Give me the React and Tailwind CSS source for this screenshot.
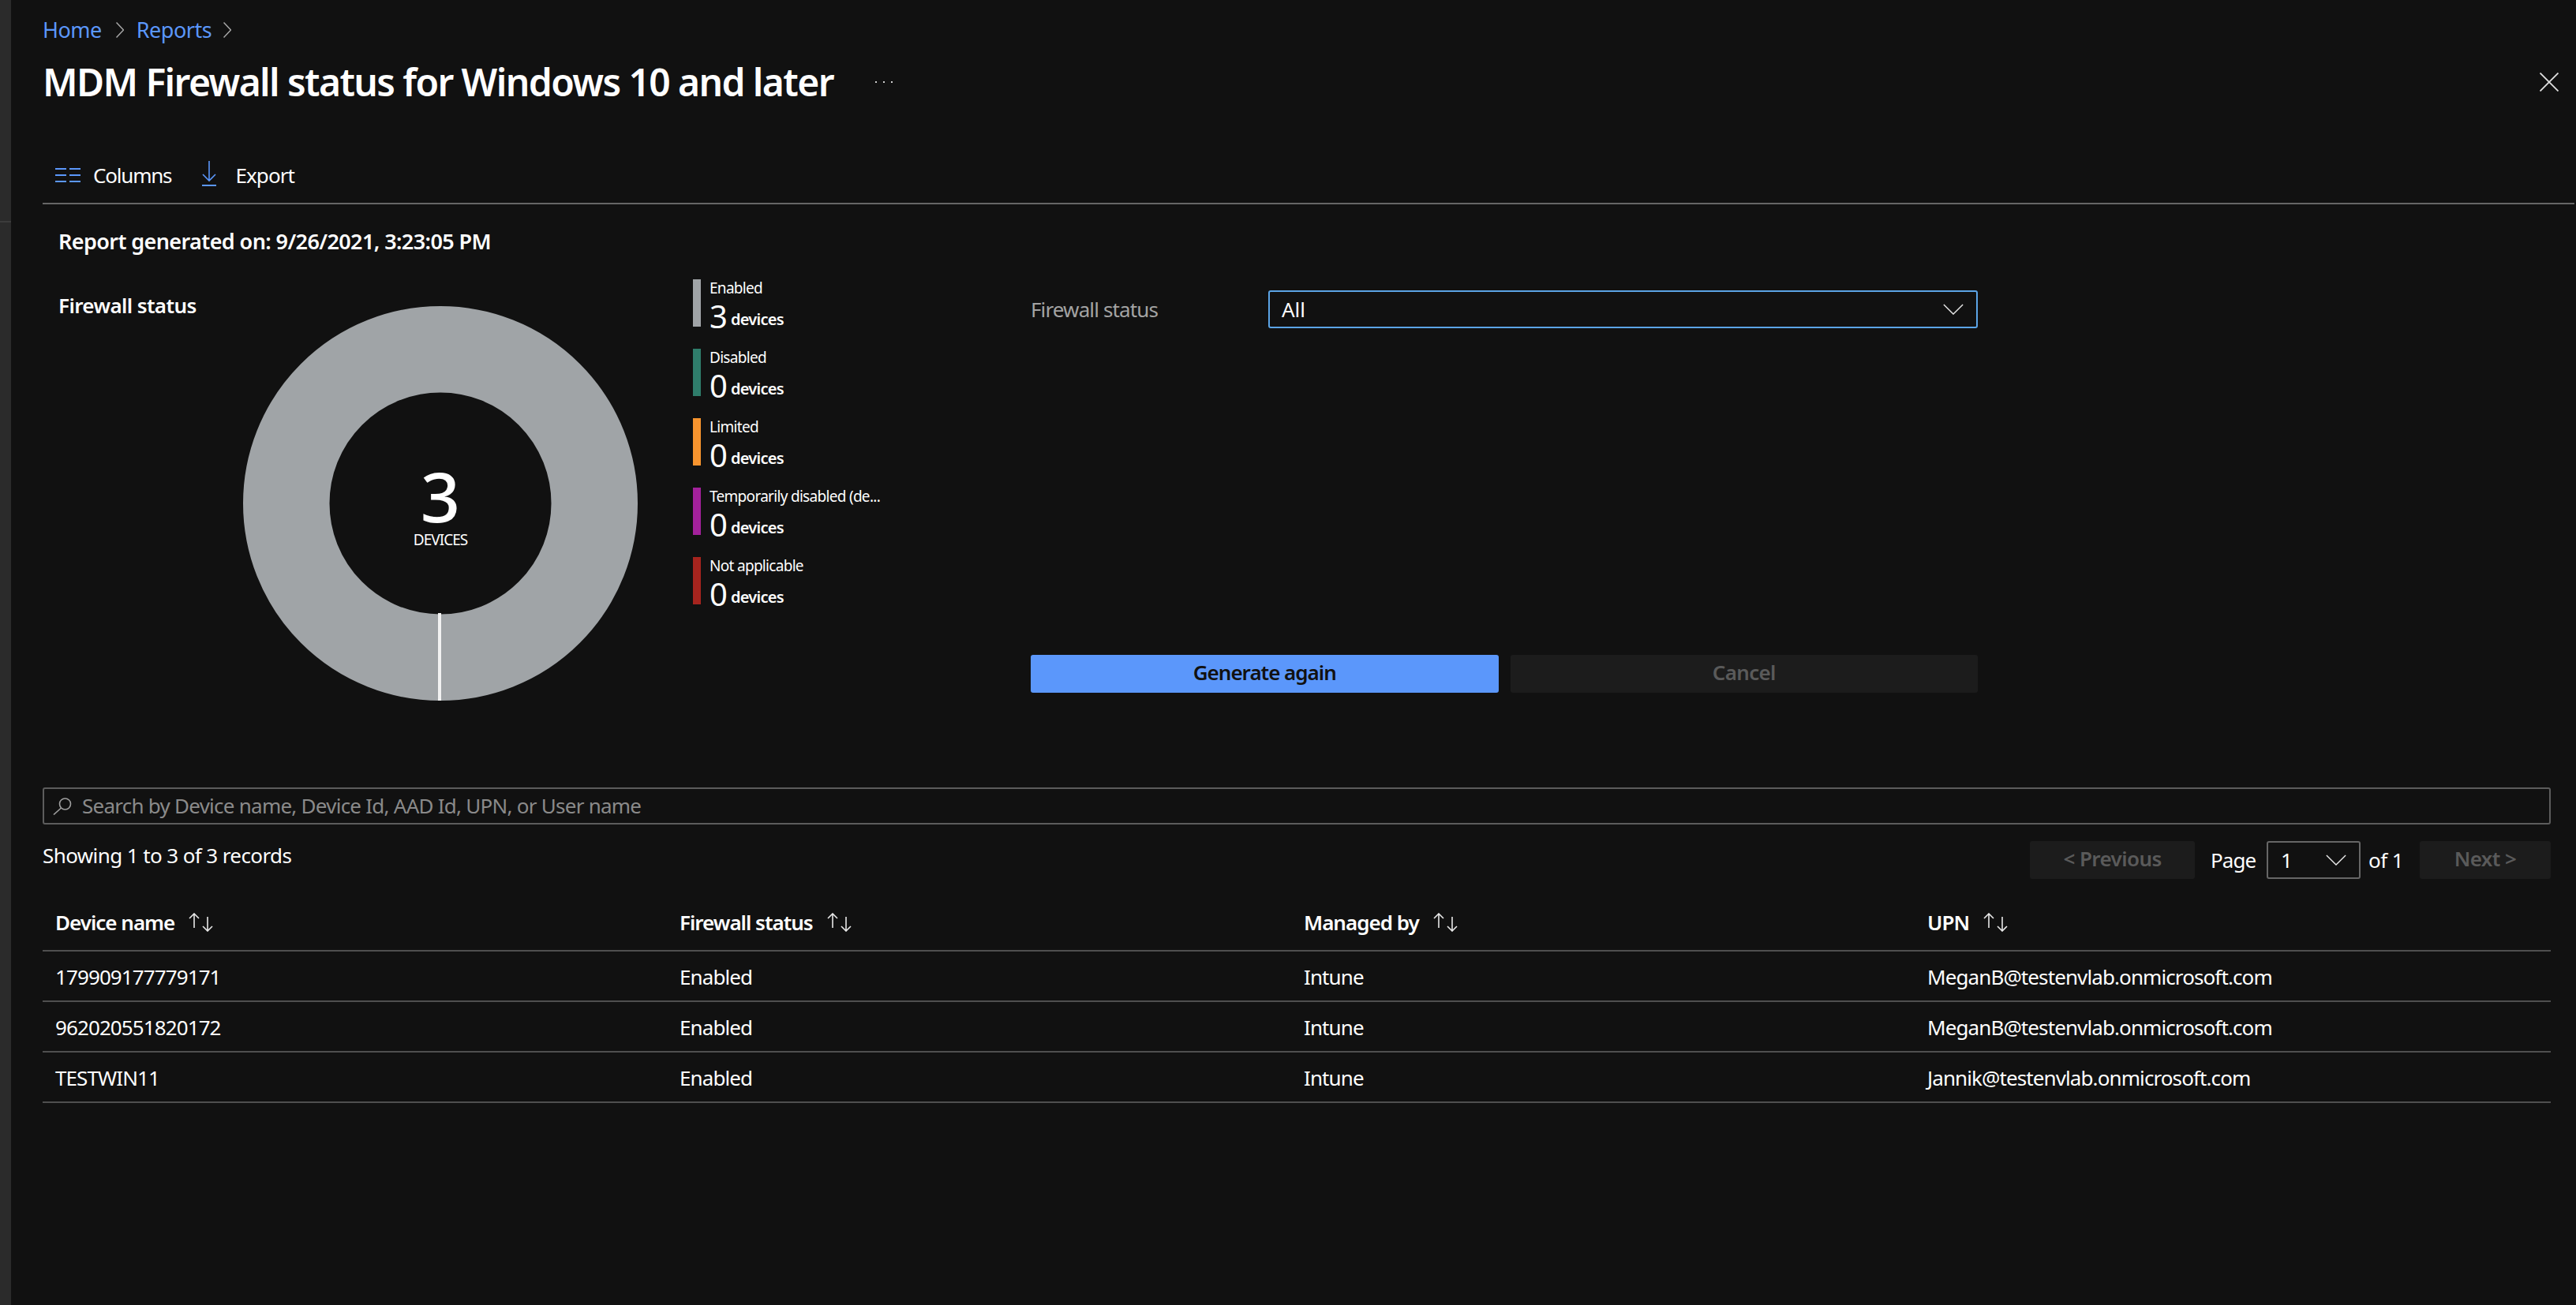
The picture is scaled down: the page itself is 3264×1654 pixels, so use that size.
import React from 'react';

const legend = [
  { label: 'Enabled', count: 3, color: 'bg-[#a0a4a7]' },
  { label: 'Disabled', count: 0, color: 'bg-[#2f7d6b]' },
  { label: 'Limited', count: 0, color: 'bg-[#f7942e]' },
  { label: 'Temporarily disabled (de...', count: 0, color: 'bg-[#a3219b]' },
  { label: 'Not applicable', count: 0, color: 'bg-[#a6241e]' },
];

const rows = [
  ['179909177779171', 'Enabled', 'Intune', 'MeganB@testenvlab.onmicrosoft.com'],
  ['962020551820172', 'Enabled', 'Intune', 'MeganB@testenvlab.onmicrosoft.com'],
  ['TESTWIN11', 'Enabled', 'Intune', 'Jannik@testenvlab.onmicrosoft.com'],
];

const font = 'font-["Noto_Sans",sans-serif]';

function Chevron({ className }) {
  return (
    <svg className={className} viewBox="0 0 30 16" fill="none" stroke="currentColor" strokeWidth="1.6">
      <path d="M1 1l14 14L29 1" />
    </svg>
  );
}

function BreadcrumbChevron() {
  return (
    <svg className="w-[10px] h-[20px] text-[#a8a8a8]" viewBox="0 0 10 20" fill="none" stroke="currentColor" strokeWidth="1.5">
      <path d="M0.5 0.5l9 9.5-9 9.5" />
    </svg>
  );
}

function SortIcon() {
  return (
    <svg className="w-[36px] h-[24px] ml-[16px] text-[#e8e8e8]" viewBox="0 0 36 24" fill="none" stroke="currentColor" strokeWidth="1.6">
      <path d="M9 19V1M3 7l6-6 6 6" />
      <path d="M26 5v18M20 17l6 6 6-6" />
    </svg>
  );
}

function App() {
  return (
    <div className={`${font} flex w-[3264px] h-[1654px] bg-[#111111] text-white overflow-hidden`}>
      <div className="w-[14px] shrink-0 bg-[#2b2b2b] flex flex-col">
        <div className="h-[280px]" />
        <div className="h-[2px] bg-[#3c3c3c]" />
      </div>

      <div className="flex-1 flex flex-col pl-[40px] pr-[2px]">
        {/* breadcrumb */}
        <div className="h-[76px] flex items-center text-[27px] text-[#5b97fb]">
          <span className="tracking-[-0.5px]">Home</span>
          <span className="ml-[18px] mr-[16px] flex"><BreadcrumbChevron /></span>
          <span className="tracking-[-0.5px]">Reports</span>
          <span className="ml-[15px] flex"><BreadcrumbChevron /></span>
        </div>

        {/* title */}
        <div className="h-[56px] flex items-center pr-[20px]">
          <h1 className="text-[48px] font-semibold tracking-[-1.6px] leading-none whitespace-nowrap">MDM Firewall status for Windows 10 and later</h1>
          <div className="ml-[53px] flex gap-[8px]">
            <span className="w-[2px] h-[2px] bg-[#d0d0d0]" />
            <span className="w-[2px] h-[2px] bg-[#d0d0d0]" />
            <span className="w-[2px] h-[2px] bg-[#d0d0d0]" />
          </div>
          <svg className="w-[24px] h-[24px] ml-auto text-[#e0e0e0]" viewBox="0 0 24 24" fill="none" stroke="currentColor" strokeWidth="1.8">
            <path d="M0.5 0.5l23 23M23.5 0.5l-23 23" />
          </svg>
        </div>

        {/* toolbar */}
        <div className="mt-[55px] h-[72px] border-b-2 border-[#666666] flex items-center pl-[16px] text-[26px]">
          <svg className="w-[32px] h-[18px] text-[#5b97fb]" viewBox="0 0 32 18" fill="none" stroke="currentColor" strokeWidth="2">
            <path d="M0 1h14M18 1h14M0 9h14M18 9h14M0 17h14M18 17h14" />
          </svg>
          <span className="ml-[16px] tracking-[-1.2px]">Columns</span>
          <svg className="ml-[39px] w-[18px] h-[32px] text-[#5b97fb] -mt-[4px]" viewBox="0 0 18 32" fill="none" stroke="currentColor" strokeWidth="1.6">
            <path d="M9 0v25M1 17l8 8 8-8" />
            <path d="M0 31h18" strokeWidth="2" />
          </svg>
          <span className="ml-[24px] tracking-[-0.9px]">Export</span>
        </div>

        {/* report body */}
        <div className="pl-[20px]">
          <div className="mt-[27px] h-[40px] flex items-center text-[27px] font-semibold tracking-[-0.6px]">Report generated on: 9/26/2021, 3:23:05 PM</div>

          <div className="mt-[28px] h-[534px] flex">
            <div className="w-[234px] shrink-0 pt-[13px] text-[26px] leading-[40px] font-semibold tracking-[-0.6px] whitespace-nowrap">Firewall status</div>

            <div className="relative mt-[34px] w-[500px] h-[500px] shrink-0">
              <svg className="w-full h-full" viewBox="0 0 500 500" fill="none">
                <circle cx="250" cy="250" r="195.25" stroke="#a0a4a7" strokeWidth="109.5" />
                <path d="M249 389v111" stroke="#f2f2f2" strokeWidth="4" />
              </svg>
              <div className="absolute inset-0 flex flex-col items-center justify-center">
                <span className="text-[88px] leading-[90px] font-medium mt-[2px]">3</span>
                <span className="text-[19px] leading-[24px] tracking-[-1px] -mt-[1px]">DEVICES</span>
              </div>
            </div>

            <div className="ml-[70px] w-[428px] shrink-0 flex flex-col gap-[28px]">
              {legend.map((item) => (
                <div key={item.label} className="flex h-[60px]">
                  <div className={`w-[10px] h-[60px] ${item.color}`} />
                  <div className="ml-[11px] flex flex-col">
                    <span className="text-[19px] leading-[23px] tracking-[-0.7px] whitespace-nowrap">{item.label}</span>
                    <div className="flex items-baseline">
                      <span className="text-[40px] leading-[39px] translate-y-[4px]">{item.count}</span>
                      <span className="ml-[4px] text-[20px] leading-[24px] font-semibold tracking-[-0.7px]">devices</span>
                    </div>
                  </div>
                </div>
              ))}
            </div>

            <div className="w-[1200px] h-[510px] mt-[14px] flex flex-col justify-between">
              <div className="flex items-center">
                <span className="w-[301px] text-[26px] text-[#a3a3a3] tracking-[-0.87px]">Firewall status</span>
                <div className="flex-1 h-[48px] border-2 border-[#5ba4e6] rounded-[3px] flex items-center justify-between pl-[15px] pr-[16px] text-[26px]">
                  <span>All</span>
                  <Chevron className="w-[26px] h-[14px] text-[#e8e8e8]" />
                </div>
              </div>
              <div className="flex gap-[15px]">
                <button className="flex-1 h-[48px] pb-[3px] rounded-[3px] bg-[#5b97fb] text-[#111111] text-[26px] font-semibold tracking-[-1px]">Generate again</button>
                <button className="flex-1 h-[48px] pb-[3px] rounded-[3px] bg-[#1c1c1c] text-[#5a5a5a] text-[26px] font-semibold tracking-[-0.7px]">Cancel</button>
              </div>
            </div>
          </div>
        </div>

        {/* search */}
        <div className="mt-[110px] w-[3178px] h-[47px] border-2 border-[#5c5c5c] rounded-[3px] flex items-center pl-[11px]">
          <svg className="w-[24px] h-[22px] text-[#a0a0a0]" viewBox="0 0 24 22" fill="none" stroke="currentColor" strokeWidth="1.6">
            <circle cx="15.5" cy="8" r="7" />
            <path d="M10.5 13L1 21.5" />
          </svg>
          <span className="ml-[13px] text-[26px] text-[#8a8a8a] tracking-[-0.75px]">Search by Device name, Device Id, AAD Id, UPN, or User name</span>
        </div>

        {/* records and paging */}
        <div className="mt-[21px] w-[3178px] h-[48px] flex items-center text-[26px]">
          <span className="tracking-[-0.6px] pb-[12px]">Showing 1 to 3 of 3 records</span>
          <div className="ml-auto flex items-center">
            <div className="w-[209px] h-[48px] pb-[3px] rounded-[3px] bg-[#1c1c1c] text-[#5a5a5a] font-semibold flex items-center justify-center tracking-[-0.6px]">&lt; Previous</div>
            <span className="ml-[20px] tracking-[-1px]">Page</span>
            <div className="ml-[14px] w-[119px] h-[48px] border-2 border-[#666666] rounded-[3px] flex items-center justify-between pl-[16px] pr-[16px]">
              <span>1</span>
              <Chevron className="w-[26px] h-[14px] text-[#e8e8e8]" />
            </div>
            <span className="ml-[10px] tracking-[-0.6px]">of 1</span>
            <div className="ml-[21px] w-[166px] h-[48px] pb-[3px] rounded-[3px] bg-[#1c1c1c] text-[#5a5a5a] font-semibold flex items-center justify-center tracking-[-0.6px]">Next &gt;</div>
          </div>
        </div>

        {/* table */}
        <div className="w-[3178px] text-[26px]">
          <div className="grid grid-cols-[791px_791px_790px_1fr] h-[92px] pt-[20px] border-b-2 border-[#4f4f4f] font-semibold">
            {['Device name', 'Firewall status', 'Managed by', 'UPN'].map((h) => (
              <div key={h} className="pl-[16px] flex items-center tracking-[-1px]">
                <span>{h}</span>
                <SortIcon />
              </div>
            ))}
          </div>
          {rows.map((row) => (
            <div key={row[0]} className="grid grid-cols-[791px_791px_790px_1fr] h-[64px] pt-[3px] border-b-2 border-[#4f4f4f]">
              {row.map((cell, i) => (
                <div key={i} className="pl-[16px] flex items-center tracking-[-0.9px]">{cell}</div>
              ))}
            </div>
          ))}
        </div>
      </div>
    </div>
  );
}

export default App;
